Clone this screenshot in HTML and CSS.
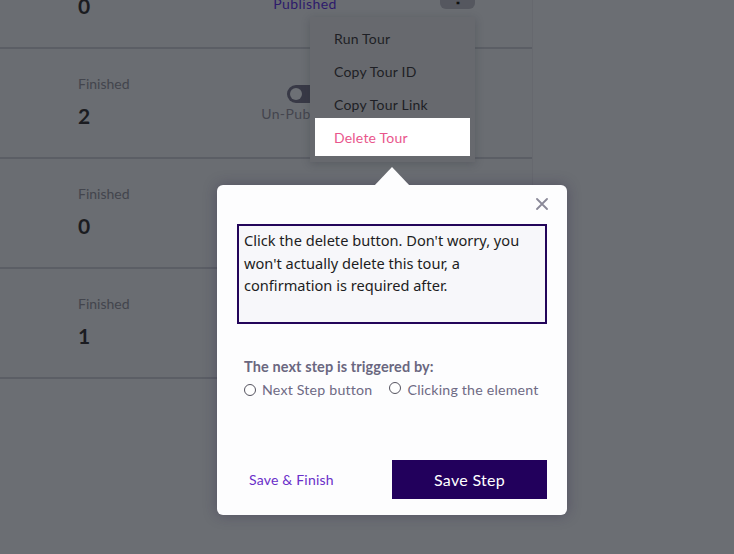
FILE: index.html
```html
<!DOCTYPE html>
<html lang="en">
<head>
<meta charset="utf-8">
<title>Tours</title>
<link rel="stylesheet" href="styles.css">
</head>
<body>
<div class="page">
  <div class="card">
    <div class="row">
      <div class="stats"><div class="label">Finished</div><div class="num">0</div></div>
      <div class="status"><div class="toggle on"><span class="knob"></span></div><div class="state published">Published</div></div>
      <div class="actions"><div class="more"><span class="dots">⋮</span></div></div>
    </div>
    <div class="row">
      <div class="stats"><div class="label">Finished</div><div class="num">2</div></div>
      <div class="status"><div class="toggle"><span class="knob"></span></div><div class="state">Un-Published</div></div>
      <div class="actions"><div class="more"><span class="dots">⋮</span></div></div>
    </div>
    <div class="row">
      <div class="stats"><div class="label">Finished</div><div class="num">0</div></div>
    </div>
    <div class="row">
      <div class="stats"><div class="label">Finished</div><div class="num">1</div></div>
    </div>
  </div>

  <div class="menu">
    <div class="menu-item">Run Tour</div>
    <div class="menu-item">Copy Tour ID</div>
    <div class="menu-item">Copy Tour Link</div>
    <div class="menu-item danger">Delete Tour</div>
  </div>

  <div class="popover">
    <span class="arrow"></span>
    <div class="pop-head">
      <svg class="close" width="12" height="12" viewBox="0 0 12 12"><path d="M1 1 L11 11 M11 1 L1 11" stroke="#8a8898" stroke-width="1.8" stroke-linecap="round" fill="none"/></svg>
    </div>
    <div class="textbox">Click the delete button. Don't worry, you won't actually delete this tour, a confirmation is required after.</div>
    <div class="trigger">
      <div class="trigger-title">The next step is triggered by:</div>
      <div class="options">
        <label class="opt"><span class="radio"></span>Next Step button</label>
        <label class="opt opt2"><span class="radio"></span>Clicking the element</label>
      </div>
    </div>
    <div class="pop-foot">
      <span class="link">Save &amp; Finish</span>
      <span class="btn">Save Step</span>
    </div>
  </div>
</div>
</body>
</html>
```

FILE: styles.css
```css
* { box-sizing: border-box; }
html, body { margin: 0; padding: 0; }
body {
  width: 734px;
  height: 554px;
  overflow: hidden;
  background: #6b6e73;
  font-family: "Lato", "Noto Sans", sans-serif;
}
.page {
  position: relative;
  width: 734px;
  height: 554px;
  overflow: hidden;
}
.card {
  width: 533px;
  margin-top: -61px;
  border-right: 1px solid #66686e;
  background: #6a6d72;
}
.row {
  height: 110px;
  border-bottom: 2px solid #5b5e65;
  display: flex;
}
.stats {
  width: 152px;
  margin-left: 78px;
  padding-top: 25px;
}
.label {
  font-size: 14px;
  line-height: 20px;
  color: #43454d;
}
.num {
  margin-top: 10px;
  font-size: 21px;
  line-height: 24px;
  font-weight: 700;
  color: #1b1c21;
}
.status {
  width: 150px;
  padding-top: 36px;
  display: flex;
  flex-direction: column;
  align-items: center;
}
.toggle {
  width: 36px;
  height: 18px;
  border-radius: 9px;
  background: #383946;
  padding: 3px;
  display: flex;
}
.toggle.on { justify-content: flex-end; background: #2c1a66; }
.knob {
  width: 12px;
  height: 12px;
  border-radius: 50%;
  background: #6d7075;
}
.state {
  margin-top: 1px;
  font-size: 14px;
  line-height: 20px;
  color: #44454e;
  letter-spacing: 0.4px;
}
.state.published { color: #2d1a6b; }
.actions {
  margin-left: auto;
  margin-right: 57px;
  padding-top: 40px;
}
.more {
  width: 35px;
  height: 30px;
  border-radius: 6px;
  background: #55575f;
  display: flex;
  align-items: center;
  justify-content: center;
  color: #111;
  font-size: 20px;
  line-height: 1;
}
.dots { font-weight: 700; }

/* dropdown menu */
.menu {
  position: absolute;
  left: 310px;
  top: 17px;
  width: 165px;
  padding: 5px 0 6px;
  background: #67696e;
  box-shadow: 0 2px 8px rgba(40, 42, 50, 0.25);
}
.menu-item {
  height: 33px;
  padding-left: 24px;
  display: flex;
  align-items: center;
  font-size: 14px;
  color: #1e1f25;
  letter-spacing: 0.2px;
}
.menu-item.danger {
  margin: -3px 5px 0 5px;
  height: 38px;
  padding-left: 19px;
  background: #ffffff;
  color: #e9568c;
}

/* popover */
.popover {
  position: absolute;
  left: 217px;
  top: 185px;
  width: 350px;
  height: 330px;
  border-radius: 6px;
  background: #fdfdfe;
  box-shadow: 0 0 14px rgba(40, 30, 70, 0.35);
  display: flex;
  flex-direction: column;
}
.arrow {
  position: absolute;
  top: -18px;
  left: 157px;
  width: 0;
  height: 0;
  border-left: 18px solid transparent;
  border-right: 18px solid transparent;
  border-bottom: 19px solid #fdfdfe;
}
.pop-head {
  height: 39px;
  display: flex;
  justify-content: flex-end;
  padding: 13px 19px 0 0;
}
.close { display: block; }
.textbox {
  margin: 0 20px;
  height: 100px;
  border: 2px solid #23055a;
  background: #f7f7fa;
  padding: 3px 5px;
  font-family: "Noto Sans", "Open Sans", sans-serif;
  font-size: 14.6px;
  line-height: 22.5px;
  color: #1d1d22;
}
.trigger {
  padding: 34px 0 0 27px;
}
.trigger-title {
  font-size: 14.5px;
  line-height: 18px;
  font-weight: 700;
  color: #6a6780;
  letter-spacing: 0.1px;
}
.options {
  display: flex;
  margin-top: 4px;
  gap: 17px;
}
.opt {
  display: flex;
  align-items: center;
  font-size: 14.2px;
  line-height: 20px;
  color: #6e6a84;
  letter-spacing: 0.2px;
}
.opt2 { align-items: flex-start; }
.opt2 .radio { margin-top: 2px; }
.radio {
  width: 12px;
  height: 12px;
  border-radius: 50%;
  border: 1px solid #55535f;
  margin-right: 6px;
  background: #fff;
}
.pop-foot {
  margin-top: auto;
  padding: 0 20px 16px 32px;
  display: flex;
  align-items: center;
  justify-content: space-between;
}
.link {
  font-size: 14px;
  color: #6a2fc9;
  letter-spacing: 0.2px;
}
.btn {
  width: 155px;
  height: 39px;
  background: #22005c;
  color: #ffffff;
  font-size: 16px;
  display: flex;
  align-items: center;
  justify-content: center;
  letter-spacing: 0.3px;
}
```
